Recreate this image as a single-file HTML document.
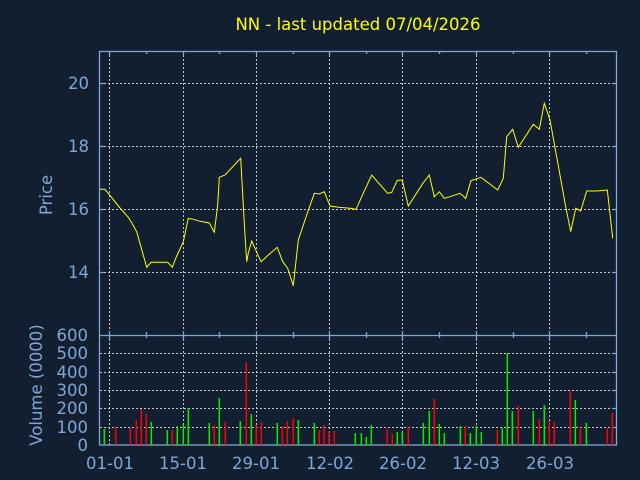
<!DOCTYPE html>
<html><head><style>
html,body{margin:0;padding:0;background:#111f30;}
svg{display:block;}
text{font-family:"DejaVu Sans","Liberation Sans",sans-serif;}
</style></head><body>
<svg width="640" height="480" viewBox="0 0 640 480" xmlns="http://www.w3.org/2000/svg">
<rect width="640" height="480" fill="#111f30"/>
<text x="358" y="30" fill="#ffff00" font-size="16.5" text-anchor="middle">NN - last updated 07/04/2026</text>
<g stroke="#c8c8c8" stroke-width="1" stroke-dasharray="2,2" fill="none">
<path d="M109.5 51V445M183.5 51V445M256.5 51V445M329.5 51V445M402.5 51V445M476.5 51V445M549.5 51V445"/>
<path d="M100 83.5H617M100 146.5H617M100 209.5H617M100 272.5H617"/>
<path d="M100 353.5H617M100 372.5H617M100 390.5H617M100 408.5H617M100 427.5H617"/>
</g>
<g stroke="#7fa6d4" stroke-width="1.3" fill="none">
<rect x="99.5" y="51.5" width="517" height="393.5"/>
<path d="M99.5 335.5H616.5"/>
<path d="M109.5 51V55M183.5 51V55M256.5 51V55M329.5 51V55M402.5 51V55M476.5 51V55M549.5 51V55M146.5 51V54M219.5 51V54M293.5 51V54M366.5 51V54M439.5 51V54M513.5 51V54M586.5 51V54"/>
<path d="M109.5 331V340M183.5 331V340M256.5 331V340M329.5 331V340M402.5 331V340M476.5 331V340M549.5 331V340M146.5 332V338M219.5 332V338M293.5 332V338M366.5 332V338M439.5 332V338M513.5 332V338M586.5 332V338"/>
<path d="M100 83.5H104M100 146.5H104M100 209.5H104M100 272.5H104M612 83.5H617M612 146.5H617M612 209.5H617M612 272.5H617"/>
<path d="M612 353.5H617M612 372.5H617M612 390.5H617M612 408.5H617M612 427.5H617"/>
</g>
<g fill="#7fa6d4" font-size="16.5" text-anchor="end">
<text x="89" y="89">20</text><text x="89" y="152">18</text><text x="89" y="215">16</text><text x="89" y="278">14</text>
<text x="88" y="341">600</text><text x="88" y="359">500</text><text x="88" y="378">400</text><text x="88" y="396">300</text><text x="88" y="414">200</text><text x="88" y="433">100</text><text x="88" y="451">0</text>
</g>
<g fill="#7fa6d4" font-size="16.5" text-anchor="middle">
<text x="110" y="469">01-01</text><text x="183" y="469">15-01</text><text x="256" y="469">29-01</text><text x="330" y="469">12-02</text><text x="403" y="469">26-02</text><text x="476" y="469">12-03</text><text x="550" y="469">26-03</text>
<text transform="translate(52,195) rotate(-90)">Price</text>
<text transform="translate(42,385) rotate(-90)">Volume (0000)</text>
</g>
<polyline fill="none" stroke="#ffff00" stroke-width="1" points="100,189.3 105,189.3 120,208 128.3,217.3 131.7,222.7 136.7,231.7 146.7,267.3 151,262.3 167.7,262.3 172.3,267.3 175.7,258.3 183.3,241.7 188.3,218.3 193.3,219.3 200,221.3 209.3,223 214.3,232.3 217.7,205 219.3,177.3 225,175 240.7,158.3 244,218.3 246.7,261.7 248.3,253.3 251.7,241 261,261.7 268.3,255 277.3,247.3 282.7,261.7 287.7,268.3 293.3,285.7 298.3,240 306.7,215 314.3,193.3 319.3,194 324.3,191.7 330,206 338.3,207.3 350,208.3 356,209.3 361.7,196.7 371.7,175 378.3,182.7 387.7,193.3 391.7,192.3 397.3,180.3 402.3,180.3 408.3,206 423.3,182.7 429.3,175 434.3,196.7 439.3,191.7 444.3,198.3 450,196.7 460,193.3 465.7,198.3 471,180.7 481,177.3 497.7,190 503.3,178.3 506.7,136.7 512.7,129.3 518.3,147.3 533.3,124.3 539.3,129.3 544.3,103.3 550,120 565.7,206.7 570.7,231.7 575.7,208.3 580.7,211 586.7,191 596.7,191 607.3,190 612.7,238.3"/>
<g stroke-width="1.5">
<path stroke="#00ee00" d="M104.3 445V429M151.3 445V422M167.3 445V430M177.3 445V426M183.3 445V424M188.3 445V408M209.3 445V423M219.3 445V398M240.3 445V421M251.3 445V414M277.3 445V423M298.3 445V420M314.3 445V423M355.3 445V433M361.3 445V433M366.3 445V437M371.3 445V425M397.3 445V432M402.3 445V432M423.3 445V423M429.3 445V411M439.3 445V424M444.3 445V433M460.3 445V426M470.3 445V433M476.3 445V426M481.3 445V432M502.3 445V428M507.3 445V353M512.3 445V411M533.3 445V411M544.3 445V405M575.3 445V400M586.3 445V423"/>
<path stroke="#ff0000" d="M115.7 445V427M130.3 445V428M136.3 445V420M141.3 445V409M146.3 445V414M172.3 445V430M214.3 445V425M225.3 445V422M246.3 445V362M256.3 445V425M261.3 445V422M282.3 445V426M287.3 445V421M293.3 445V418M319.3 445V430M324 445V425M329 445V431M334.3 445V431M387.3 445V429M392.3 445V434M408.3 445V427M434.3 445V399M465.3 445V426M497.3 445V430M518.3 445V406M539.3 445V419M549.3 445V421M554.3 445V422M570.3 445V391M580.3 445V426M607.3 445V428M612.3 445V413"/>
</g>
</svg>
</body></html>
